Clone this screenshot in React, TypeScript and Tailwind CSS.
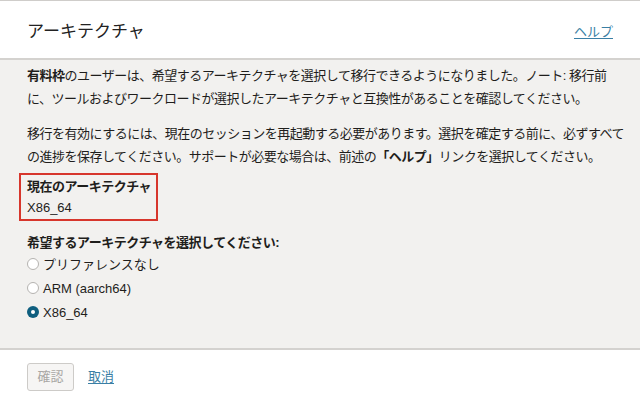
const font = "font-['Liberation_Sans','Noto_Sans_CJK_JP',sans-serif]";

const options = [
  { label: "プリファレンスなし", checked: false },
  { label: "ARM (aarch64)", checked: false },
  { label: "X86_64", checked: true },
];

function Radio({ checked }: { checked: boolean }) {
  if (checked) {
    return (
      <span className="flex h-[12px] w-[12px] items-center justify-center rounded-full bg-[#0f5f7f]">
        <span className="h-[4px] w-[4px] rounded-full bg-white" />
      </span>
    );
  }
  return <span className="h-[12px] w-[12px] rounded-full border border-[#b5b3b0] bg-white" />;
}

export default function App() {
  return (
    <div className={`flex h-[403px] w-[640px] flex-col bg-white text-[#1f1e1c] ${font}`}>
      {/* Header */}
      <div className="flex h-[60px] items-center justify-between border-t border-b-2 border-t-[#cfcdca] border-b-[#d4d2cf] px-[27px] pt-[5px]">
        <h1 className="text-[17px] text-[#222]">アーキテクチャ</h1>
        <a className="text-[13px] text-[#3a7fa5] underline underline-offset-2">ヘルプ</a>
      </div>

      {/* Body */}
      <div className="flex-1 bg-[#f2f1ef] px-[27px] pt-[4px] text-[13px] leading-[23px] tracking-[-0.5px]">
        <p className="whitespace-nowrap">
          <b>有料枠</b>のユーザーは、希望するアーキテクチャを選択して移行できるようになりました。ノート: 移行前
          <br />
          に、ツールおよびワークロードが選択したアーキテクチャと互換性があることを確認してください。
        </p>
        <p className="mt-[12px] whitespace-nowrap">
          移行を有効にするには、現在のセッションを再起動する必要があります。選択を確定する前に、必ずすべて
          <br />
          の進捗を保存してください。サポートが必要な場合は、前述の<b>「ヘルプ」</b>リンクを選択してください。
        </p>

        <div className="-ml-[8px] mt-[5px] w-fit border-2 border-[#d7362c] py-[1px] pl-[6px] pr-[5px] leading-[21px]">
          <div className="font-bold">現在のアーキテクチャ</div>
          <div className="tracking-normal">X86_64</div>
        </div>

        <div className="mt-[11px] font-bold leading-[21px]">希望するアーキテクチャを選択してください:</div>
        <div className="-mt-[1px] flex flex-col tracking-normal">
          {options.map((o) => (
            <label key={o.label} className="flex h-[24px] items-center gap-[4px]">
              <Radio checked={o.checked} />
              <span>{o.label}</span>
            </label>
          ))}
        </div>
      </div>

      {/* Footer */}
      <div className="flex h-[55px] items-center gap-[14px] border-t-2 border-[#d4d2cf] px-[27px]">
        <button className="h-[28px] w-[47px] rounded-[3px] border border-[#cdcbc8] bg-[#f6f5f4] text-[13px] text-[#a9a7a4]">
          確認
        </button>
        <a className="text-[13px] text-[#3a7fa5] underline underline-offset-2">取消</a>
      </div>
    </div>
  );
}
